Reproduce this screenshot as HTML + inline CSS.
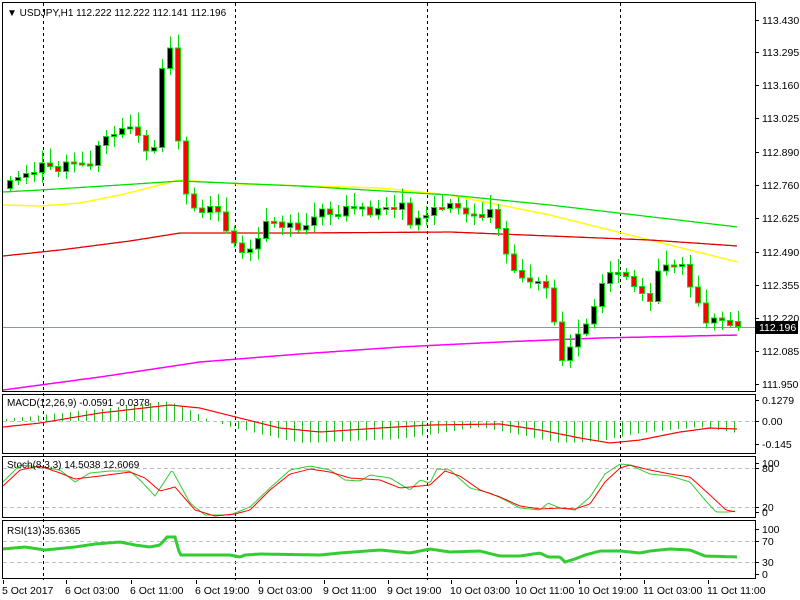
<!DOCTYPE html>
<html><head><meta charset="utf-8"><style>
html,body{margin:0;padding:0;background:#fff;}
svg{display:block;font-family:"Liberation Sans",sans-serif;font-size:10.5px;}
</style></head><body>
<svg id="s" width="800" height="600" xmlns="http://www.w3.org/2000/svg" shape-rendering="crispEdges">
<rect width="800" height="600" fill="#fff"/>
<g id="grid"></g>
<g id="lines" shape-rendering="auto"></g>
<g id="candles"></g>
<g id="frame" fill="none" stroke="#000">
<rect x="2.5" y="2.5" width="753" height="389"/>
<rect x="2.5" y="394.5" width="753" height="59" />
<rect x="2.5" y="456.5" width="753" height="61" />
<rect x="2.5" y="520.5" width="753" height="58" />
</g>
<g fill="#000">
<text x="7" y="16" style="font-size:10px">▼ USDJPY,H1  112.222 112.222 112.141 112.196</text>
<text x="7" y="406" style="font-size:10px">MACD(12,26,9) -0.0591 -0.0378</text>
<text x="7" y="468" style="font-size:10px">Stoch(8,3,3) 14.5038 12.6069</text>
<text x="7" y="534" style="font-size:10px">RSI(13) 35.6365</text>
<g id="axis"></g>
</g>
<rect x="756" y="321" width="42" height="13" fill="#000"/>
<text x="759" y="331" fill="#fff">112.196</text>
</svg>
<script>
const NS="http://www.w3.org/2000/svg";
function el(p,t,a,txt){const e=document.createElementNS(NS,t);for(const k in a)e.setAttribute(k,a[k]);if(txt!=null)e.textContent=txt;document.getElementById(p).appendChild(e);return e;}
function interp(P,x){if(x<=P[0][0])return P[0][1];for(let i=1;i<P.length;i++){if(x<=P[i][0]){const a=P[i-1],b=P[i];return a[1]+(b[1]-a[1])*(x-a[0])/(b[0]-a[0]);}}return P[P.length-1][1];}
function poly(P,color,w,step){let pts=[];for(let x=P[0][0];x<=P[P.length-1][0];x+=(step||2))pts.push(x+","+interp(P,x).toFixed(1));el("lines","polyline",{points:pts.join(" "),fill:"none",stroke:color,"stroke-width":w||1});}
[43,235,427,620].forEach(x=>el("grid","line",{x1:x+.5,y1:3,x2:x+.5,y2:580,stroke:"#000","stroke-dasharray":"3,3"}));
[421,468,507,541,562].forEach(y=>el("grid","line",{x1:3,y1:y+.5,x2:755,y2:y+.5,stroke:"#c0c0c0","stroke-dasharray":"4,3"}));
el("grid","line",{x1:3,y1:327.5,x2:755,y2:327.5,stroke:"#8c96a0"});
[["113.430",24],["113.295",56],["113.160",89],["113.025",122],["112.890",156],["112.760",189],["112.625",222],["112.490",256],["112.355",289],["112.220",322],["112.085",355],["111.950",388],
["0.1279",404],["0.00",425],["-0.145",448],["100",467],["80",472],["20",511],["0",516],["100",533],["70",545],["30",566],["0",578]].forEach(([t,y])=>{el("axis","text",{x:762,y:y},t);el("axis","line",{x1:756,y1:y-4+.5,x2:759,y2:y-4+.5,stroke:"#000"});});
[["5 Oct 2017",2],["6 Oct 03:00",65],["6 Oct 11:00",130],["6 Oct 19:00",195],["9 Oct 03:00",258],["9 Oct 11:00",323],["9 Oct 19:00",387],["10 Oct 03:00",450],["10 Oct 11:00",515],["10 Oct 19:00",578],["11 Oct 03:00",643],["11 Oct 11:00",707]].forEach(([t,x])=>{el("axis","text",{x:x,y:594},t);el("axis","line",{x1:x+1.5,y1:580,x2:x+1.5,y2:584,stroke:"#000"});});
poly([[3,205],[40,206],[80,203],[120,195],[160,185],[178,180],[240,184],[380,188],[450,195],[550,215],[650,240],[738,262]],"#ffff00",1.5);
poly([[3,192],[40,190],[120,185],[180,181],[300,186],[450,195],[550,205],[738,227]],"#00e000",1.3);
poly([[3,256],[60,250],[130,241],[180,233],[300,233],[450,232],[550,236],[650,240],[738,246]],"#e00000",1.3);
poly([[3,390],[100,377],[200,362],[300,354],[400,347],[500,342],[600,338],[738,335]],"#ff00ff",1.5);
const C=[[10,185],[20,177],[30,168],[45,165],[60,168],[75,164],[90,160],[100,145],[110,130],[122,133],[130,128],[140,135],[150,153],[157,148],[163,52],[172,42],[180,180],[190,205],[205,208],[220,212],[235,250],[245,255],[260,230],[270,220],[285,225],[300,232],[315,210],[330,214],[350,210],[362,205],[375,213],[390,205],[405,208],[412,233],[420,210],[440,210],[452,198],[460,217],[475,212],[490,212],[500,232],[515,278],[530,280],[540,275],[548,296],[556,330],[565,370],[573,340],[583,330],[592,305],[600,290],[610,272],[620,268],[628,285],[640,290],[650,296],[660,268],[670,262],[680,264],[690,288],[700,304],[708,322],[716,320],[726,320],[738,326]];
let prev=188;
for(let i=0;i<92;i++){const x=10+8*i;if(x>740)break;let c=interp(C,x)+((i*37)%7-3)*1.6;let o=prev;if(x>=738){o=321;c=326;}
 const top=Math.min(o,c),bot=Math.max(o,c);const hi=top-4-((i*13)%11),lo=bot+3+((i*29)%9);
 el("candles","line",{x1:x+.5,y1:hi,x2:x+.5,y2:lo,stroke:"#00e000"});
 const h=Math.max(bot-top,2);
 el("candles","rect",{x:x-3+.5,y:top+.5,width:5,height:h,fill:c<o?"#000":"#f00",stroke:"#00e000"});
 prev=c;}
for(let x=6;x<740;x+=8){let v=interp([[6,2],[60,8],[120,14],[165,20],[185,14],[205,3],[230,-6],[300,-22],[400,-18],[440,-12],[480,-6],[520,-14],[560,-22],[600,-20],[640,-12],[700,-6],[738,-12]],x);
 el("lines","line",{x1:x+.5,y1:421,x2:x+.5,y2:421-v,stroke:"#22c022","shape-rendering":"crispEdges"});}
poly([[3,427],[40,423],[100,413],[170,405],[200,408],[240,418],[280,428],[320,432],[380,428],[430,425],[500,424],[540,430],[580,438],[610,443],[640,440],[680,432],[710,428],[738,429]],"#f00",1.2);
poly([[3,482],[20,465],[40,467],[60,470],[75,482],[90,473],[110,471],[130,471],[140,480],[155,496],[172,470],[190,503],[205,515],[230,515],[250,507],[270,488],[290,470],[310,466],[330,470],[345,480],[360,481],[370,475],[390,478],[410,490],[420,480],[430,483],[437,469],[450,470],[470,488],[490,493],[505,500],[520,508],[540,510],[548,503],[560,508],[575,510],[590,497],[605,474],[620,464],[630,465],[650,474],[670,476],[690,482],[705,500],[716,512],[728,512],[736,511]],"#3c3",1);
poly([[3,486],[20,470],[40,466],[60,473],[75,479],[100,476],[130,472],[145,478],[160,491],[175,487],[195,510],[215,516],[235,514],[250,510],[270,490],[290,474],[310,469],[330,472],[350,478],[380,480],[400,488],[420,486],[430,485],[445,471],[460,476],[480,490],[500,497],[520,506],[540,509],[560,508],[575,509],[590,504],[605,482],[620,468],[630,465],[650,470],[670,474],[690,477],[710,495],[726,510],[736,512]],"#f00",1);
poly([[3,549],[25,547],[45,550],[75,547],[95,544],[120,542],[135,545],[150,547],[160,545],[167,537],[175,537],[180,555],[230,555],[240,557],[245,555],[260,554],[320,555],[340,553],[380,550],[410,553],[430,549],[450,552],[480,551],[500,556],[520,556],[540,553],[548,557],[560,557],[565,562],[575,559],[585,555],[600,551],[620,551],[640,553],[650,551],[670,549],[690,550],[705,556],[738,557]],"#3c3",3);
</script>
</body></html>
